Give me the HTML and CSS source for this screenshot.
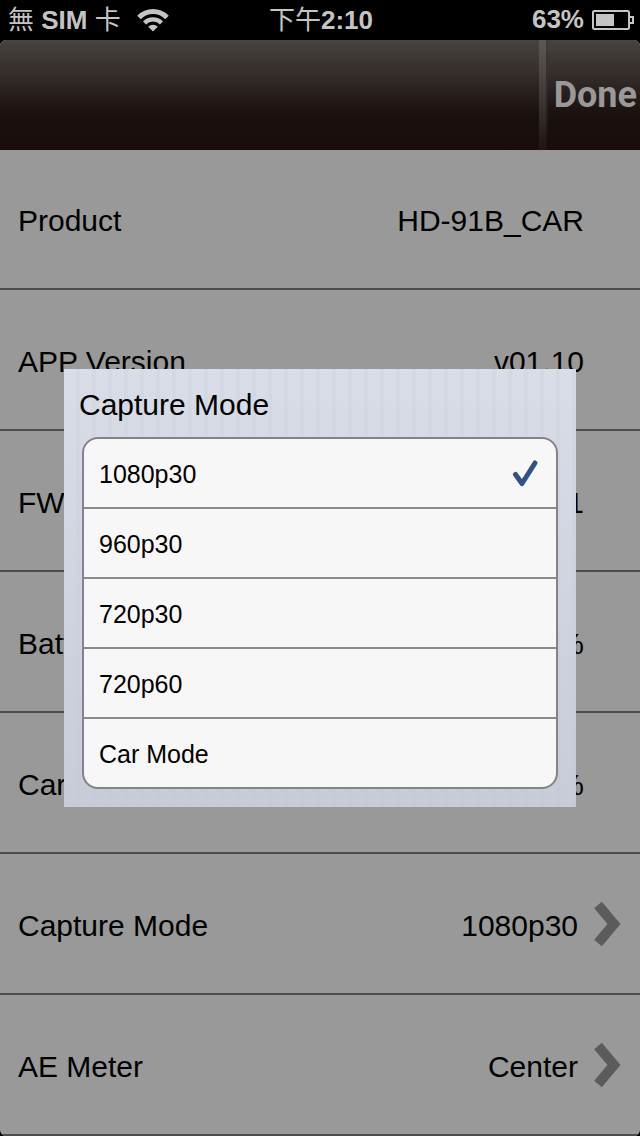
FILE: index.html
```html
<!DOCTYPE html>
<html lang="zh-Hant">
<head>
	<meta charset="utf-8">
	<meta name="viewport" content="width=device-width">
	<title>Capture Mode</title>
	<link rel="stylesheet" href="styles.css">
</head>
<body>
	<div class="status">
		<div class="carrier">
			<span><span class="cjk">無</span> SIM <span class="cjk">卡</span></span>
			<svg class="wifi" width="32" height="24" viewBox="0 0 32 24">
				<path d="M2 9.500a19.500 19.500 0 0 1 28 0" fill="none" stroke="#c4c4c4" stroke-width="5"/>
				<path d="M7.500 15a12 12 0 0 1 17 0" fill="none" stroke="#c4c4c4" stroke-width="4.200"/>
				<path d="M16 23.500l-4.800-4.800a6.600 6.600 0 0 1 9.600 0z" fill="#c4c4c4"/>
			</svg>
		</div>
		<div class="clock"><span class="cjk">下午</span>2:10</div>
		<div class="power">
			<span>63%</span>
			<svg width="42" height="20" viewBox="0 0 42 20">
				<rect x="1" y="1" width="36" height="18" rx="1.500" fill="none" stroke="#c4c4c4" stroke-width="2"/>
				<rect x="4" y="4" width="18" height="12" fill="#c4c4c4"/>
				<path d="M38 7h3v6h-3" fill="none" stroke="#c4c4c4" stroke-width="2"/>
			</svg>
		</div>
	</div>
	<div class="screen">
		<div class="header">
			<button type="button" class="done">Done</button>
		</div>
		<ul class="settings">
			<li><span>Product</span><span>HD-91B_CAR</span></li>
			<li><span>APP Version</span><span>v01.10</span></li>
			<li><span>FW Version</span><span>v01.01</span></li>
			<li><span>Battery</span><span>100%</span></li>
			<li><span>Card</span><span>100%</span></li>
			<li>
				<a href="#">
					<span>Capture Mode</span>
					<span class="value">1080p30</span>
					<svg class="chevron" width="28" height="46" viewBox="0 0 28 46"><path d="M4 4L20 23L4 42" fill="none" stroke="#5b5b5b" stroke-width="10"/></svg>
				</a>
			</li>
			<li>
				<a href="#">
					<span>AE Meter</span>
					<span class="value">Center</span>
					<svg class="chevron" width="28" height="46" viewBox="0 0 28 46"><path d="M4 4L20 23L4 42" fill="none" stroke="#5b5b5b" stroke-width="10"/></svg>
				</a>
			</li>
		</ul>
		<!-- popup over the settings list -->
		<div class="mask">
			<form class="popup" role="dialog" aria-labelledby="popup-title">
				<h2 id="popup-title">Capture Mode</h2>
				<div class="options" role="radiogroup" aria-labelledby="popup-title">
					<label><input type="radio" name="mode" checked>1080p30<svg class="tick" width="26" height="30" viewBox="0 0 26 30"><path d="M3.500 15.500L10 24.500L23 4" fill="none" stroke="#305289" stroke-width="5" stroke-linecap="round" stroke-linejoin="round"/></svg></label>
					<label><input type="radio" name="mode">960p30</label>
					<label><input type="radio" name="mode">720p30</label>
					<label><input type="radio" name="mode">720p60</label>
					<label><input type="radio" name="mode">Car Mode</label>
				</div>
			</form>
		</div>
	</div>
</body>
</html>
```
FILE: styles.css
```css
*{
	margin: 0;
	padding: 0;
	box-sizing: border-box;
}
body{
	background-color: #000;
	font-family: "Liberation Sans", "Noto Sans CJK TC", sans-serif;
	color: #000;
}
svg{
	display: block;
	flex: none;
}

/* status bar */
.status{
	display: grid;
	grid-template-columns: 1fr auto 1fr;
	align-items: center;
	height: 40px;
	padding: 0 6px 0 8px;
	font-size: 26px;
	font-weight: bold;
	line-height: 36px;
	color: #c4c4c4;
}
.status span, .clock{
	padding-bottom: 2px;
}
.cjk{
	font-family: "Noto Sans CJK TC", sans-serif;
	font-weight: normal;
}
.carrier, .power{
	display: flex;
	align-items: center;
}
.carrier{
	gap: 16px;
}
.power{
	gap: 8px;
	justify-content: flex-end;
}

/* header */
.screen{
	position: relative;
	overflow: hidden;
	border-radius: 6px;
	background-color: #999;
}
.header{
	display: flex;
	justify-content: flex-end;
	height: 110px;
	background: linear-gradient(#48433f, #352e2b 30%, #1a100e 68%, #180d0b);
}
.done{
	display: flex;
	align-items: center;
	padding-right: 3px;
	border: 0;
	background: none;
	font-family: Roboto, "Liberation Sans", sans-serif;
	font-size: 36px;
	font-weight: bold;
	color: #999;
}
.done:before{
	content: "";
	align-self: stretch;
	width: 7px;
	margin-right: 6px;
	border-right: 2px solid rgba(0,0,0,0.3);
	background: linear-gradient(#5d5855, #433d3b 45%, #1f1512);
}

/* settings list */
.settings{
	list-style-type: none;
	font-size: 30px;
}
.settings li{
	display: flex;
	justify-content: space-between;
	align-items: center;
	height: 141px;
	padding: 0 56px 0 18px;
	border-bottom: 2px solid #4c4c4c;
}
.settings li:first-child{
	height: 140px;
}
.settings li:has(a){
	padding-right: 18px;
}
.settings span{
	padding-top: 4px;
}
.settings a{
	flex: 1;
	display: flex;
	align-items: center;
	color: inherit;
	text-decoration: none;
}
.value{
	margin-left: auto;
}
.chevron{
	margin-left: 16px;
}

/* popup */
.mask{
	position: absolute;
	inset: 0;
	display: flex;
	justify-content: center;
	align-items: center;
}
.popup{
	width: 80%;
	padding: 0 18px 18px;
	background:
		repeating-linear-gradient(90deg, transparent 0 12px, rgba(190,198,215,0.2) 12px 16px),
		linear-gradient(#d9dde7, #c8ccd7);
}
.popup h2{
	margin-left: -3px;
	padding-top: 4px;
	font-size: 30px;
	font-weight: normal;
	line-height: 64px;
}
.options{
	border: 2px solid #848484;
	border-radius: 16px;
	background-color: #f7f7f7;
	overflow: hidden;
}
.options label{
	display: flex;
	align-items: center;
	height: 70px;
	padding: 2px 18px 0 15px;
	border-bottom: 2px solid #8b8b8b;
	font-size: 25px;
}
.options label:last-child{
	height: 68px;
	border-bottom: 0;
}
.options input{
	position: absolute;
	appearance: none;
}
.tick{
	margin-left: auto;
}
```
